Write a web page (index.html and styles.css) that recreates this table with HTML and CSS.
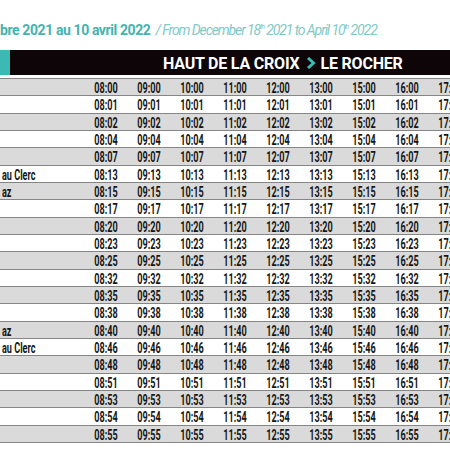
FILE: index.html
```html
<!DOCTYPE html>
<html lang="fr">
<head>
<meta charset="utf-8">
<title>Horaires</title>
<link rel="stylesheet" href="styles.css">
</head>
<body>
<div class="page">
  <div class="title"><span class="fr">bre 2021 au 10 avril 2022</span><span class="en">/ From December 18<sup>th</sup> 2021 to April 10<sup>th</sup> 2022</span></div>
  <div class="bar">
    <div class="accent"></div>
    <div class="bar-title"><span>HAUT DE LA CROIX</span><svg class="chev" width="10" height="12" viewBox="0 0 10 12"><polyline points="2,1 7.5,6 2,11" fill="none" stroke="#3cb9b2" stroke-width="3"/></svg><span>LE ROCHER</span></div>
  </div>
  <div class="table">
    <div class="row g"><div class="stop"></div><div class="t"><span>08:00</span></div><div class="t"><span>09:00</span></div><div class="t"><span>10:00</span></div><div class="t"><span>11:00</span></div><div class="t"><span>12:00</span></div><div class="t"><span>13:00</span></div><div class="t"><span>15:00</span></div><div class="t"><span>16:00</span></div><div class="t"><span>17:00</span></div></div>
    <div class="row"><div class="stop"></div><div class="t"><span>08:01</span></div><div class="t"><span>09:01</span></div><div class="t"><span>10:01</span></div><div class="t"><span>11:01</span></div><div class="t"><span>12:01</span></div><div class="t"><span>13:01</span></div><div class="t"><span>15:01</span></div><div class="t"><span>16:01</span></div><div class="t"><span>17:01</span></div></div>
    <div class="row g"><div class="stop"></div><div class="t"><span>08:02</span></div><div class="t"><span>09:02</span></div><div class="t"><span>10:02</span></div><div class="t"><span>11:02</span></div><div class="t"><span>12:02</span></div><div class="t"><span>13:02</span></div><div class="t"><span>15:02</span></div><div class="t"><span>16:02</span></div><div class="t"><span>17:02</span></div></div>
    <div class="row"><div class="stop"></div><div class="t"><span>08:04</span></div><div class="t"><span>09:04</span></div><div class="t"><span>10:04</span></div><div class="t"><span>11:04</span></div><div class="t"><span>12:04</span></div><div class="t"><span>13:04</span></div><div class="t"><span>15:04</span></div><div class="t"><span>16:04</span></div><div class="t"><span>17:04</span></div></div>
    <div class="row g"><div class="stop"></div><div class="t"><span>08:07</span></div><div class="t"><span>09:07</span></div><div class="t"><span>10:07</span></div><div class="t"><span>11:07</span></div><div class="t"><span>12:07</span></div><div class="t"><span>13:07</span></div><div class="t"><span>15:07</span></div><div class="t"><span>16:07</span></div><div class="t"><span>17:07</span></div></div>
    <div class="row"><div class="stop"><span>au Clerc</span></div><div class="t"><span>08:13</span></div><div class="t"><span>09:13</span></div><div class="t"><span>10:13</span></div><div class="t"><span>11:13</span></div><div class="t"><span>12:13</span></div><div class="t"><span>13:13</span></div><div class="t"><span>15:13</span></div><div class="t"><span>16:13</span></div><div class="t"><span>17:13</span></div></div>
    <div class="row g"><div class="stop"><span>az</span></div><div class="t"><span>08:15</span></div><div class="t"><span>09:15</span></div><div class="t"><span>10:15</span></div><div class="t"><span>11:15</span></div><div class="t"><span>12:15</span></div><div class="t"><span>13:15</span></div><div class="t"><span>15:15</span></div><div class="t"><span>16:15</span></div><div class="t"><span>17:15</span></div></div>
    <div class="row"><div class="stop"></div><div class="t"><span>08:17</span></div><div class="t"><span>09:17</span></div><div class="t"><span>10:17</span></div><div class="t"><span>11:17</span></div><div class="t"><span>12:17</span></div><div class="t"><span>13:17</span></div><div class="t"><span>15:17</span></div><div class="t"><span>16:17</span></div><div class="t"><span>17:17</span></div></div>
    <div class="row g"><div class="stop"></div><div class="t"><span>08:20</span></div><div class="t"><span>09:20</span></div><div class="t"><span>10:20</span></div><div class="t"><span>11:20</span></div><div class="t"><span>12:20</span></div><div class="t"><span>13:20</span></div><div class="t"><span>15:20</span></div><div class="t"><span>16:20</span></div><div class="t"><span>17:20</span></div></div>
    <div class="row"><div class="stop"></div><div class="t"><span>08:23</span></div><div class="t"><span>09:23</span></div><div class="t"><span>10:23</span></div><div class="t"><span>11:23</span></div><div class="t"><span>12:23</span></div><div class="t"><span>13:23</span></div><div class="t"><span>15:23</span></div><div class="t"><span>16:23</span></div><div class="t"><span>17:23</span></div></div>
    <div class="row g"><div class="stop"></div><div class="t"><span>08:25</span></div><div class="t"><span>09:25</span></div><div class="t"><span>10:25</span></div><div class="t"><span>11:25</span></div><div class="t"><span>12:25</span></div><div class="t"><span>13:25</span></div><div class="t"><span>15:25</span></div><div class="t"><span>16:25</span></div><div class="t"><span>17:25</span></div></div>
    <div class="row"><div class="stop"></div><div class="t"><span>08:32</span></div><div class="t"><span>09:32</span></div><div class="t"><span>10:32</span></div><div class="t"><span>11:32</span></div><div class="t"><span>12:32</span></div><div class="t"><span>13:32</span></div><div class="t"><span>15:32</span></div><div class="t"><span>16:32</span></div><div class="t"><span>17:32</span></div></div>
    <div class="row g"><div class="stop"></div><div class="t"><span>08:35</span></div><div class="t"><span>09:35</span></div><div class="t"><span>10:35</span></div><div class="t"><span>11:35</span></div><div class="t"><span>12:35</span></div><div class="t"><span>13:35</span></div><div class="t"><span>15:35</span></div><div class="t"><span>16:35</span></div><div class="t"><span>17:35</span></div></div>
    <div class="row"><div class="stop"></div><div class="t"><span>08:38</span></div><div class="t"><span>09:38</span></div><div class="t"><span>10:38</span></div><div class="t"><span>11:38</span></div><div class="t"><span>12:38</span></div><div class="t"><span>13:38</span></div><div class="t"><span>15:38</span></div><div class="t"><span>16:38</span></div><div class="t"><span>17:38</span></div></div>
    <div class="row g"><div class="stop"><span>az</span></div><div class="t"><span>08:40</span></div><div class="t"><span>09:40</span></div><div class="t"><span>10:40</span></div><div class="t"><span>11:40</span></div><div class="t"><span>12:40</span></div><div class="t"><span>13:40</span></div><div class="t"><span>15:40</span></div><div class="t"><span>16:40</span></div><div class="t"><span>17:40</span></div></div>
    <div class="row"><div class="stop"><span>au Clerc</span></div><div class="t"><span>08:46</span></div><div class="t"><span>09:46</span></div><div class="t"><span>10:46</span></div><div class="t"><span>11:46</span></div><div class="t"><span>12:46</span></div><div class="t"><span>13:46</span></div><div class="t"><span>15:46</span></div><div class="t"><span>16:46</span></div><div class="t"><span>17:46</span></div></div>
    <div class="row g"><div class="stop"></div><div class="t"><span>08:48</span></div><div class="t"><span>09:48</span></div><div class="t"><span>10:48</span></div><div class="t"><span>11:48</span></div><div class="t"><span>12:48</span></div><div class="t"><span>13:48</span></div><div class="t"><span>15:48</span></div><div class="t"><span>16:48</span></div><div class="t"><span>17:48</span></div></div>
    <div class="row"><div class="stop"></div><div class="t"><span>08:51</span></div><div class="t"><span>09:51</span></div><div class="t"><span>10:51</span></div><div class="t"><span>11:51</span></div><div class="t"><span>12:51</span></div><div class="t"><span>13:51</span></div><div class="t"><span>15:51</span></div><div class="t"><span>16:51</span></div><div class="t"><span>17:51</span></div></div>
    <div class="row g"><div class="stop"></div><div class="t"><span>08:53</span></div><div class="t"><span>09:53</span></div><div class="t"><span>10:53</span></div><div class="t"><span>11:53</span></div><div class="t"><span>12:53</span></div><div class="t"><span>13:53</span></div><div class="t"><span>15:53</span></div><div class="t"><span>16:53</span></div><div class="t"><span>17:53</span></div></div>
    <div class="row"><div class="stop"></div><div class="t"><span>08:54</span></div><div class="t"><span>09:54</span></div><div class="t"><span>10:54</span></div><div class="t"><span>11:54</span></div><div class="t"><span>12:54</span></div><div class="t"><span>13:54</span></div><div class="t"><span>15:54</span></div><div class="t"><span>16:54</span></div><div class="t"><span>17:54</span></div></div>
    <div class="row g last"><div class="stop"></div><div class="t"><span>08:55</span></div><div class="t"><span>09:55</span></div><div class="t"><span>10:55</span></div><div class="t"><span>11:55</span></div><div class="t"><span>12:55</span></div><div class="t"><span>13:55</span></div><div class="t"><span>15:55</span></div><div class="t"><span>16:55</span></div><div class="t"><span>17:55</span></div></div>
  </div>
</div>
</body>
</html>
```
FILE: styles.css
```css
html, body {
  margin: 0;
  padding: 0;
  background: #ffffff;
}
.page {
  width: 450px;
  height: 450px;
  overflow: hidden;
  font-family: Roboto, "Liberation Sans", sans-serif;
}
.title {
  padding-top: 20px;
  height: 20px;
  padding-bottom: 10px;
  line-height: 20px;
  white-space: nowrap;
  font-size: 14px;
}
.title .fr {
  font-weight: 700;
  color: #45b3ae;
  letter-spacing: -0.4px;
  margin-right: 5px;
}
.title .en {
  font-style: italic;
  font-weight: 400;
  color: #82c9c6;
  letter-spacing: -1.1px;
}
.title sup {
  font-size: 7px;
  line-height: 0;
  vertical-align: 6px;
}
.bar {
  display: flex;
  height: 25px;
  background: #0d0508;
}
.accent {
  width: 10px;
  background: #3cb9b2;
}
.bar-title {
  display: flex;
  align-items: center;
  padding-left: 153px;
  padding-top: 1px;
  color: #ffffff;
  font-weight: 700;
  font-size: 16px;
  letter-spacing: -0.2px;
  white-space: nowrap;
}
.chev {
  margin: 0 5px 0 6px;
}
.table {
  margin-top: 3px;
}
.row {
  display: grid;
  grid-template-columns: 84.5px repeat(9, 43px);
  height: 17.33px;
  box-sizing: border-box;
  border-top: 1px solid #858585;
  background: #ffffff;
  align-items: center;
  font-weight: 700;
  font-size: 14px;
  color: #161616;
}
.row.g {
  background: #dadada;
}
.row.last {
  border-bottom: 1px solid #858585;
  height: 18.33px;
}
.t {
  text-align: center;
  white-space: nowrap;
  padding-top: 1px;
}
.t span, .stop span {
  display: inline-block;
  transform: scaleX(0.65);
}
.stop {
  white-space: nowrap;
  padding-left: 2px;
  padding-top: 1px;
}
.stop span {
  transform-origin: left center;
}
```
